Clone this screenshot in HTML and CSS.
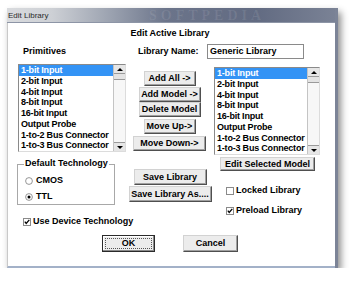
FILE: index.html
```html
<!DOCTYPE html>
<html>
<head>
<meta charset="utf-8">
<link rel="stylesheet" href="styles.css">
</head>
<body>
<div class="dialog">
  <div class="titlebar">
    <span class="title">Edit Library</span>
    <span class="wm">SOFTPEDIA</span>
  </div>
  <div class="body">
    <div class="heading">Edit Active Library</div>
    <div class="row-name">
      <div class="prim">Primitives</div>
      <div class="libname">Library Name:</div>
      <div class="textbox">Generic Library</div>
    </div>
    <div class="row-lists">
      <div class="list list-left">
        <div class="items">
          <div class="item sel">1-bit Input</div>
          <div class="item">2-bit Input</div>
          <div class="item">4-bit Input</div>
          <div class="item">8-bit Input</div>
          <div class="item">16-bit Input</div>
          <div class="item">Output Probe</div>
          <div class="item">1-to-2 Bus Connector</div>
          <div class="item">1-to-3 Bus Connector</div>
        </div>
        <div class="sb">
          <div class="sbtn"><span class="arr-up"></span></div>
          <div class="thumb"></div>
          <div class="track"></div>
          <div class="sbtn sbtn-down"><span class="arr-down"></span></div>
        </div>
      </div>
      <div class="btncol">
        <div class="btn b-addall">Add All -&gt;</div>
        <div class="btn b-addmodel">Add Model -&gt;</div>
        <div class="btn b-delete">Delete Model</div>
        <div class="btn b-up">Move Up-&gt;</div>
        <div class="btn b-down">Move Down-&gt;</div>
      </div>
      <div class="list list-right">
        <div class="items">
          <div class="item sel">1-bit Input</div>
          <div class="item">2-bit Input</div>
          <div class="item">4-bit Input</div>
          <div class="item">8-bit Input</div>
          <div class="item">16-bit Input</div>
          <div class="item">Output Probe</div>
          <div class="item">1-to-2 Bus Connector</div>
          <div class="item">1-to-3 Bus Connector</div>
        </div>
        <div class="sb">
          <div class="sbtn"><span class="arr-up"></span></div>
          <div class="thumb"></div>
          <div class="track"></div>
          <div class="sbtn sbtn-down"><span class="arr-down"></span></div>
        </div>
      </div>
    </div>
    <div class="row-lower">
      <div class="lcol">
        <div class="group">
          <div class="gtitle">Default Technology</div>
          <div class="opt opt-cmos">
            <svg class="radio" width="8" height="8" viewBox="0 0 8 8"><circle cx="4" cy="4" r="3.4" fill="#fff" stroke="#8a8a8a" stroke-width="0.9"/></svg>
            <span>CMOS</span>
          </div>
          <div class="opt opt-ttl">
            <svg class="radio" width="8" height="8" viewBox="0 0 8 8"><circle cx="4" cy="4" r="3.4" fill="#fff" stroke="#8a8a8a" stroke-width="0.9"/><circle cx="4" cy="4" r="1.5" fill="#000"/></svg>
            <span>TTL</span>
          </div>
        </div>
        <div class="chk chk-device">
          <svg class="cbox" width="8" height="8" viewBox="0 0 8 8"><rect x="0.5" y="0.5" width="7" height="7" fill="#fff" stroke="#8a8a8a"/><path d="M1.8 3.6 L3.2 5.4 L6.3 1.9" fill="none" stroke="#000" stroke-width="1.3"/></svg>
          <span>Use Device Technology</span>
        </div>
      </div>
      <div class="mcol">
        <div class="btn b-save">Save Library</div>
        <div class="btn b-saveas">Save Library As....</div>
      </div>
      <div class="rcol">
        <div class="btn b-edit">Edit Selected Model</div>
        <div class="chk chk-locked">
          <svg class="cbox" width="8" height="8" viewBox="0 0 8 8"><rect x="0.5" y="0.5" width="7" height="7" fill="#fff" stroke="#8a8a8a"/></svg>
          <span>Locked Library</span>
        </div>
        <div class="chk chk-preload">
          <svg class="cbox" width="8" height="8" viewBox="0 0 8 8"><rect x="0.5" y="0.5" width="7" height="7" fill="#fff" stroke="#8a8a8a"/><path d="M1.8 3.6 L3.2 5.4 L6.3 1.9" fill="none" stroke="#000" stroke-width="1.3"/></svg>
          <span>Preload Library</span>
        </div>
      </div>
    </div>
    <div class="row-ok">
      <div class="btn b-ok"><span class="focus">OK</span></div>
      <div class="btn b-cancel">Cancel</div>
    </div>
  </div>
</div>
</body>
</html>
```
FILE: styles.css
```css
* { box-sizing: border-box; }
html, body { margin: 0; padding: 0; background: #fff; }
body {
  font-family: "Liberation Sans", Arial, sans-serif;
  font-size: 9px;
  font-weight: bold;
  line-height: 11px;
  color: #000;
}
.dialog {
  margin: 8px 0 0 7px;
  width: 331px;
  height: 260px;
  display: flex;
  flex-direction: column;
  border-right: 3px solid #7c8497;
  box-shadow: 3px 4px 7px rgba(0,0,0,0.45);
}
.titlebar {
  position: relative;
  height: 15px;
  flex: none;
  display: flex;
  align-items: center;
  padding-left: 1px;
  overflow: hidden;
  background: linear-gradient(to right, #d9dbde 0px, #cdd0d5 45px, #9aa1af 105px, #6b748a 160px, #626b82 250px, #7a8295 328px);
  border-bottom: 1px solid #8d95a6;
}
.title {
  font-weight: normal;
  font-size: 8px;
  color: #2a2a2a;
}
.wm {
  position: absolute;
  left: 142px;
  top: 0px;
  font-family: "Liberation Serif", serif;
  font-size: 14px;
  line-height: 15px;
  letter-spacing: 4px;
  color: rgba(255,255,255,0.09);
}
.body {
  flex: 1;
  background: #fff;
  border-left: 1px solid #c9c9c9;
  border-bottom: 2px solid #a3b1c8;
}
.heading {
  padding-top: 5px;
  padding-right: 3px;
  height: 16px;
  text-align: center;
}
.row-name {
  margin-top: 5px;
  height: 15px;
  display: flex;
  align-items: center;
}
.prim { width: 130px; padding-left: 15px; }
.libname { width: 69px; }
.textbox {
  width: 97px;
  height: 15px;
  border: 1px solid #8a8a8a;
  padding-left: 2px;
  display: flex;
  align-items: center;
  background: #fff;
}
.row-lists {
  margin-top: 5px;
  display: flex;
  align-items: flex-start;
  padding-left: 10px;
}
.list {
  display: flex;
  height: 88px;
  background: #fff;
  border: 1px solid;
  border-color: #8a8a8a #dcdcdc #dcdcdc #8a8a8a;
  overflow: hidden;
}
.list-left { width: 108px; }
.list-right { width: 106px; margin-left: 1px; margin-top: 3px; }
.items { flex: 1; min-width: 0; overflow: hidden; }
.item {
  height: 10.75px;
  line-height: 10.75px;
  padding-left: 2px;
  white-space: nowrap;
  overflow: hidden;
  letter-spacing: -0.2px;
}
.item.sel { background: #3393f5; color: #fff; }
.sb {
  width: 12px;
  flex: none;
  display: flex;
  flex-direction: column;
  border-left: 1px solid #c4c4c4;
  background: #f3f3f3;
}
.sbtn {
  height: 9px;
  flex: none;
  display: flex;
  align-items: center;
  justify-content: center;
  background: #e6e6e6;
  border-bottom: 1px solid #9a9a9a;
}
.sbtn-down { border-bottom: none; border-top: 1px solid #9a9a9a; }
.arr-up {
  width: 0; height: 0;
  border-left: 3px solid transparent;
  border-right: 3px solid transparent;
  border-bottom: 3px solid #000;
}
.arr-down {
  width: 0; height: 0;
  border-left: 3px solid transparent;
  border-right: 3px solid transparent;
  border-top: 3px solid #000;
}
.thumb {
  height: 6px;
  flex: none;
  background: #e3e3e3;
  border-bottom: 1px solid #9a9a9a;
}
.track { flex: 1; background: #f7f7f7; }
.btncol {
  width: 87px;
  display: flex;
  flex-direction: column;
  align-items: center;
  padding-top: 7px;
}
.btn {
  height: 15px;
  display: flex;
  align-items: center;
  justify-content: center;
  white-space: nowrap;
  background: #ececec;
  border: 1px solid;
  border-color: #d2d2d2 #4f4f4f #4f4f4f #d2d2d2;
  box-shadow: inset -1px -1px #a0a0a0;
}
.b-addall { width: 52px; }
.b-addmodel { width: 62px; margin-top: 1px; }
.b-delete { width: 62px; }
.b-up { width: 52px; margin-top: 2px; }
.b-down { width: 73px; margin-top: 2px; }
.row-lower {
  display: flex;
  align-items: flex-start;
}
.lcol { width: 119px; }
.group {
  margin: 9px 0 0 9px;
  width: 98px;
  border: 1px solid #a8a8a8;
  padding-bottom: 2px;
}
.gtitle {
  width: max-content;
  margin: -7px 0 0 6px;
  padding: 0 1px;
  height: 11px;
  background: #fff;
}
.opt {
  display: flex;
  align-items: center;
  height: 11px;
  margin-left: 7px;
}
.opt-cmos { margin-top: 6px; }
.opt-ttl { margin-top: 5px; }
.radio { margin-right: 3px; flex: none; }
.chk {
  display: flex;
  align-items: center;
  height: 11px;
  white-space: nowrap;
}
.cbox { margin-right: 2px; flex: none; }
.chk-device { margin: 11px 0 0 15px; width: max-content; }
.mcol {
  width: 86px;
  display: flex;
  flex-direction: column;
  align-items: center;
  padding-top: 14px;
}
.b-save { width: 73px; height: 16px; }
.b-saveas { width: 83px; height: 16px; margin-top: 1px; }
.rcol { padding-top: 2px; }
.b-edit { width: 95px; height: 14px; margin-left: 7px; }
.chk-locked { margin: 14px 0 0 13px; }
.chk-preload { margin: 9px 0 0 13px; }
.row-ok {
  margin-top: 8px;
  display: flex;
  justify-content: center;
  gap: 28px;
  padding-right: 3px;
}
.b-ok {
  width: 53px;
  height: 17px;
  border-color: #2a2a2a;
  box-shadow: inset -1px -1px #8a8a8a, inset 1px 1px #fff;
  padding: 2px;
}
.focus {
  flex: 1;
  align-self: stretch;
  display: flex;
  align-items: center;
  justify-content: center;
  outline: 1px dotted #555;
  outline-offset: -1px;
}
.b-cancel { width: 55px; height: 17px; }
```
